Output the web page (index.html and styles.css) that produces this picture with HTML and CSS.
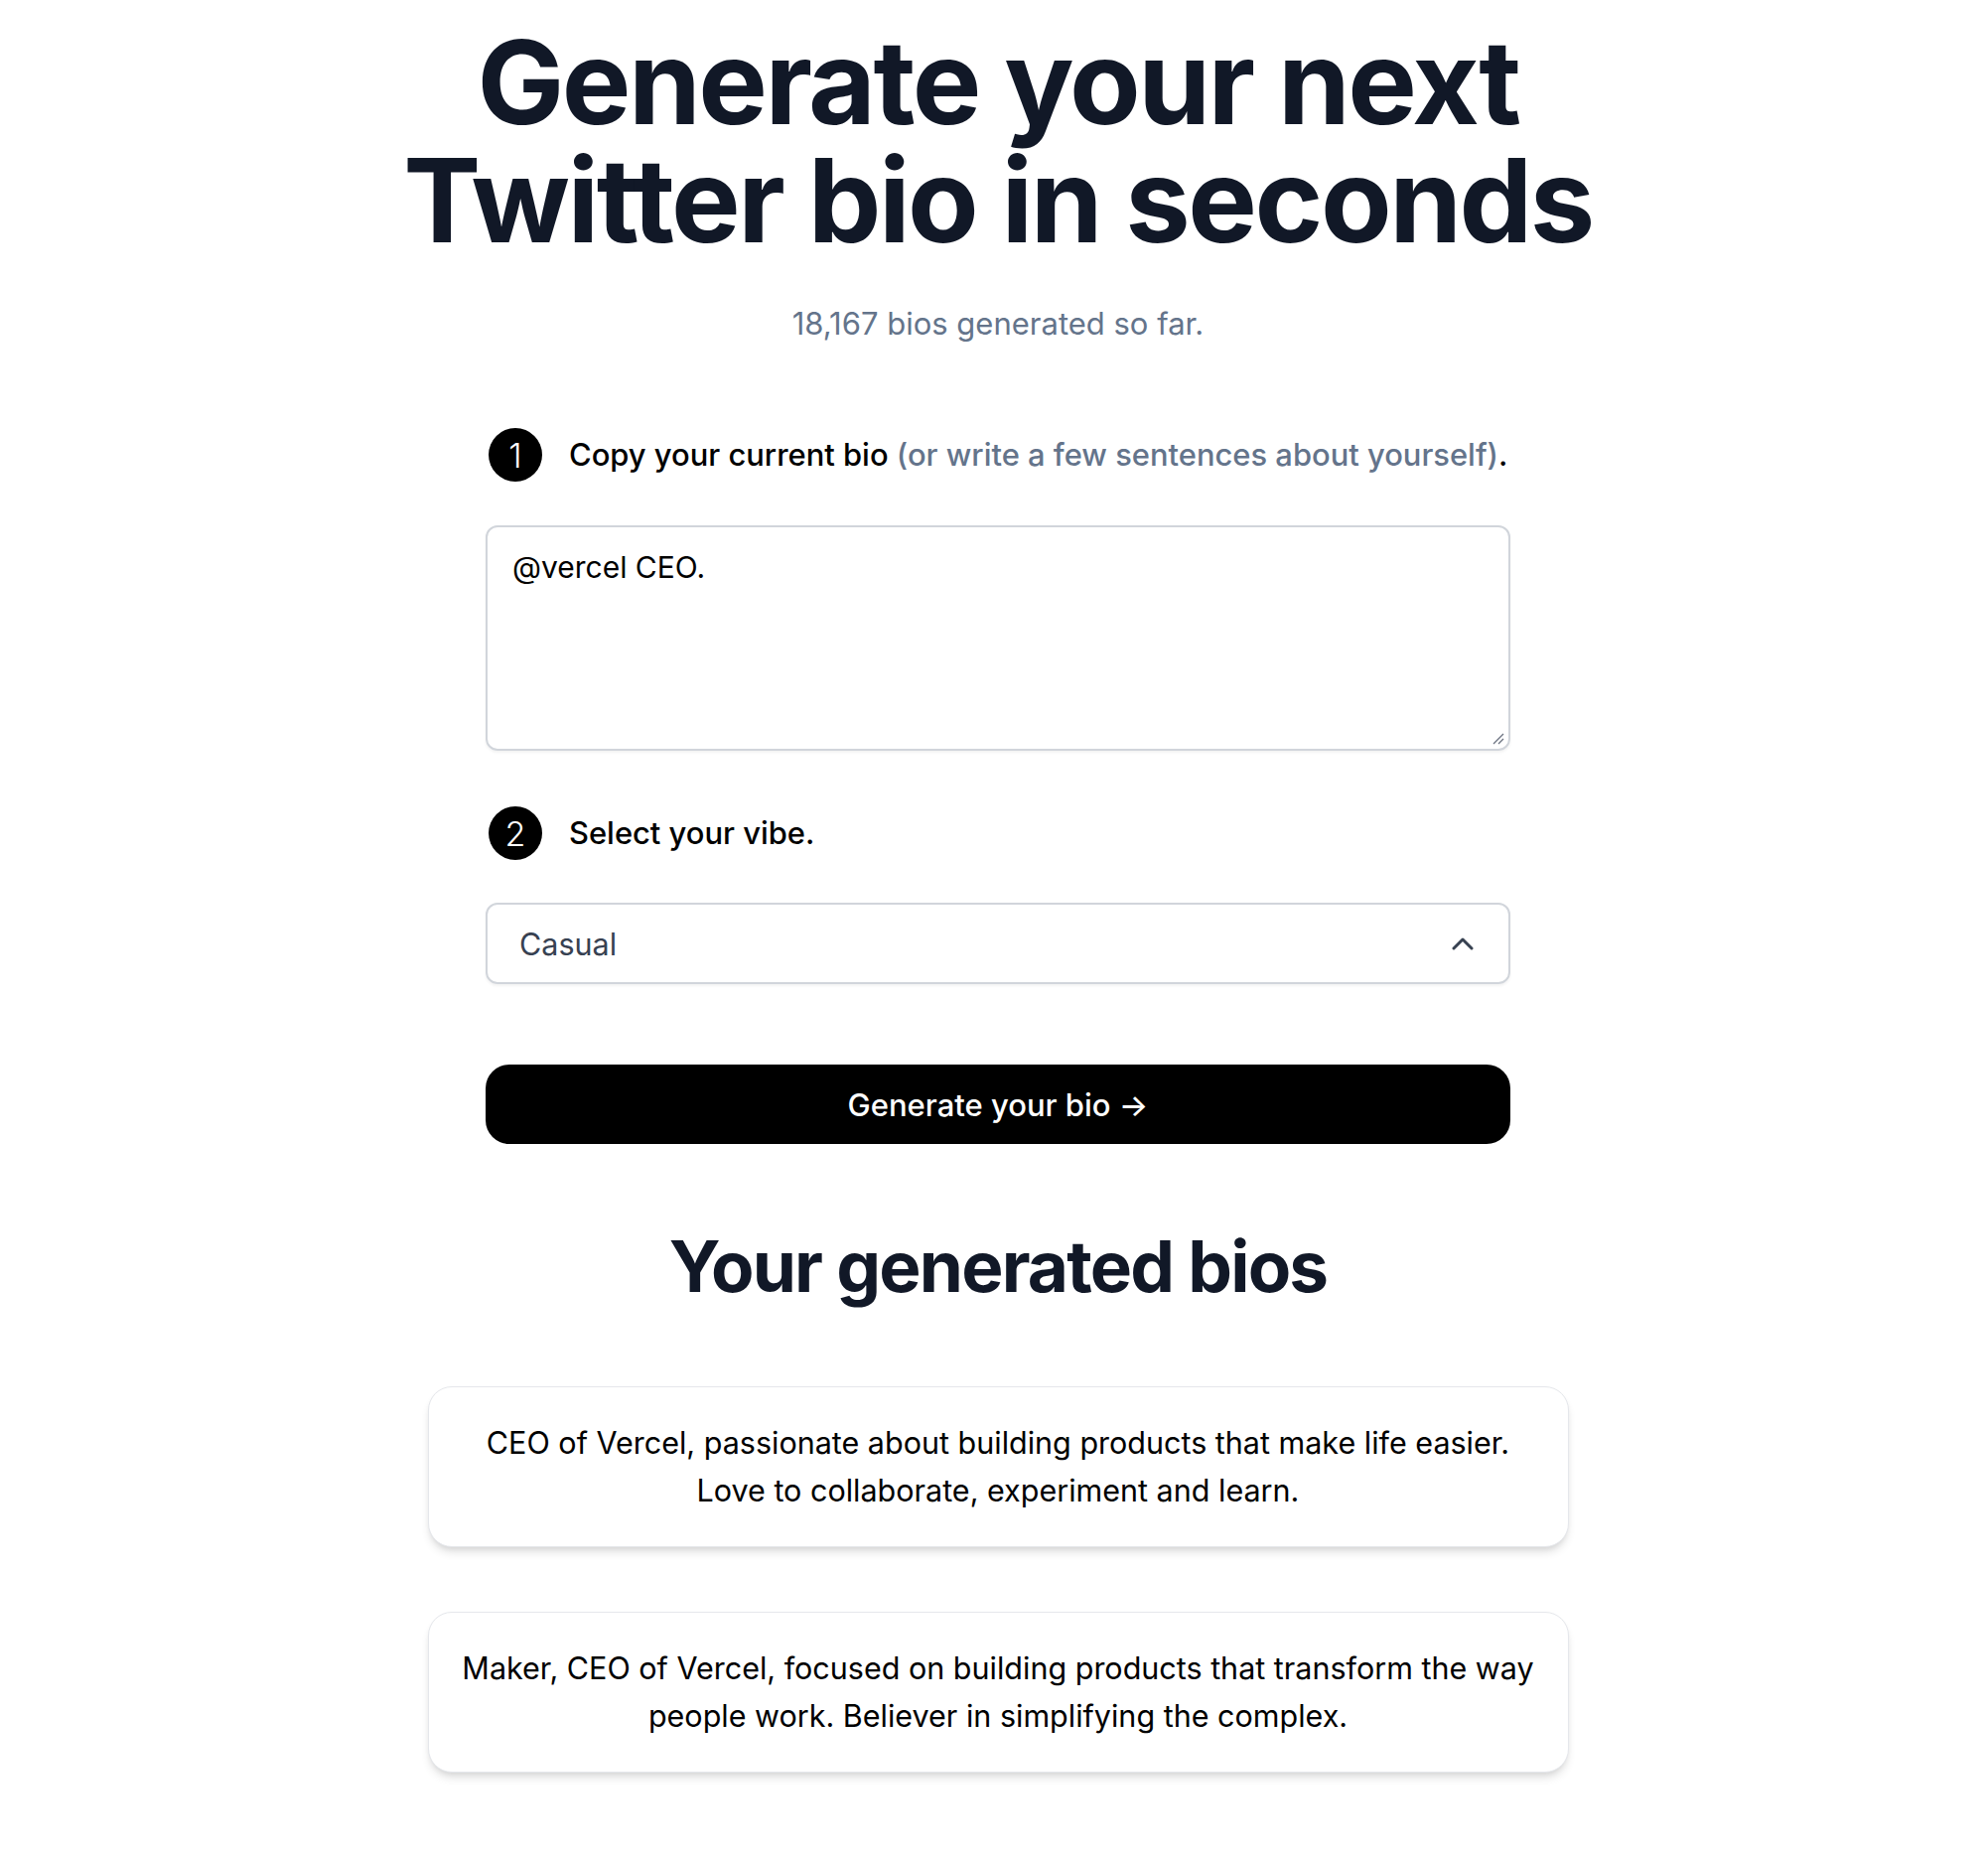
FILE: index.html
```html
<!DOCTYPE html>
<html lang="en">
<head>
<meta charset="utf-8">
<title>Twitter Bio Generator</title>
<link rel="stylesheet" href="styles.css">
</head>
<body>
<main class="page">
  <h1 class="title">Generate your next<br>Twitter bio in seconds</h1>
  <p class="count">18,167 bios generated so far.</p>

  <section class="form">
    <div class="step">
      <span class="num">1</span>
      <p class="step-text">Copy your current bio <span class="muted">(or write a few sentences about yourself)</span>.</p>
    </div>
    <div class="bio">
      <span class="bio-text">@vercel CEO.</span>
      <svg class="grip" width="14" height="14" viewBox="0 0 14 14"><path d="M13 3 L3 13 M13 8 L8 13" stroke="#6b7280" stroke-width="1.3" fill="none"/></svg>
    </div>

    <div class="step step-two">
      <span class="num">2</span>
      <p class="step-text">Select your vibe.</p>
    </div>
    <div class="select">
      <span class="select-text">Casual</span>
      <svg class="chevron" width="22" height="14" viewBox="0 0 22 14"><path d="M2 12 L11 3 L20 12" stroke="#374151" stroke-width="3" fill="none" stroke-linecap="round" stroke-linejoin="round"/></svg>
    </div>

    <button class="gen" type="button">Generate your bio &rarr;</button>
  </section>

  <h2 class="subtitle">Your generated bios</h2>

  <div class="cards">
    <div class="card">CEO of Vercel, passionate about building products that make life easier.<br>Love to collaborate, experiment and learn.</div>
    <div class="card">Maker, CEO of Vercel, focused on building products that transform the way<br>people work. Believer in simplifying the complex.</div>
  </div>
</main>
</body>
</html>
```

FILE: styles.css
```css
* { box-sizing: border-box; }

html, body {
  margin: 0;
  padding: 0;
  background: #ffffff;
}

body {
  font-family: Inter, "Noto Sans", "Liberation Sans", sans-serif;
  color: #000000;
  padding-left: 8px;
}

.page {
  display: flex;
  flex-direction: column;
  align-items: center;
  padding-bottom: 80px;
}

.title {
  margin: 23px 0 0;
  font-size: 117px;
  line-height: 119px;
  font-weight: 700;
  letter-spacing: -2.5px;
  color: #111827;
  text-align: center;
}

.count {
  margin: 41px 0 0;
  font-size: 31px;
  line-height: 48px;
  color: #64748b;
}

.form {
  width: 1032px;
  margin-top: 81px;
  display: flex;
  flex-direction: column;
}

.step {
  display: flex;
  align-items: center;
  gap: 27px;
  padding-left: 3px;
}

.step-two {
  margin-top: 56px;
}

.num {
  width: 54px;
  height: 54px;
  border-radius: 50%;
  background: #000000;
  color: #ffffff;
  display: flex;
  align-items: center;
  justify-content: center;
  font-size: 34px;
  font-weight: 300;
  flex: none;
}

.step-text {
  margin: 0;
  font-size: 30.9px;
  line-height: 48px;
  font-weight: 500;
  color: #000000;
  white-space: nowrap;
}

.muted {
  color: #64748b;
}

.bio {
  position: relative;
  margin-top: 44px;
  height: 227px;
  border: 2px solid #d1d5db;
  border-radius: 12px;
  padding: 16px 25px;
  box-shadow: 0 2px 3px rgba(0, 0, 0, 0.05);
  font-size: 30px;
  line-height: 48px;
  color: #000000;
}

.grip {
  position: absolute;
  right: 4px;
  bottom: 4px;
}

.select {
  margin-top: 43px;
  height: 82px;
  border: 2px solid #d1d5db;
  border-radius: 12px;
  box-shadow: 0 2px 3px rgba(0, 0, 0, 0.05);
  display: flex;
  align-items: center;
  justify-content: space-between;
  padding: 0 35px 0 32px;
  font-size: 30.5px;
  color: #374151;
}

.gen {
  margin-top: 81px;
  height: 80px;
  border: none;
  border-radius: 24px;
  background: #000000;
  color: #ffffff;
  font-family: inherit;
  font-size: 31px;
  font-weight: 500;
  cursor: pointer;
}

.subtitle {
  margin: 83px 0 0;
  font-size: 71px;
  line-height: 80px;
  font-weight: 700;
  letter-spacing: -1.8px;
  color: #111827;
}

.cards {
  width: 1149px;
  margin-top: 81px;
  display: flex;
  flex-direction: column;
  gap: 65px;
}

.card {
  border: 1px solid #e5e7eb;
  border-radius: 24px;
  padding: 32px 20px;
  background: #ffffff;
  box-shadow: 0 7px 10px -2px rgba(0, 0, 0, 0.12), 0 3px 6px -3px rgba(0, 0, 0, 0.1);
  text-align: center;
  font-size: 30.5px;
  line-height: 48px;
  white-space: nowrap;
}
```
